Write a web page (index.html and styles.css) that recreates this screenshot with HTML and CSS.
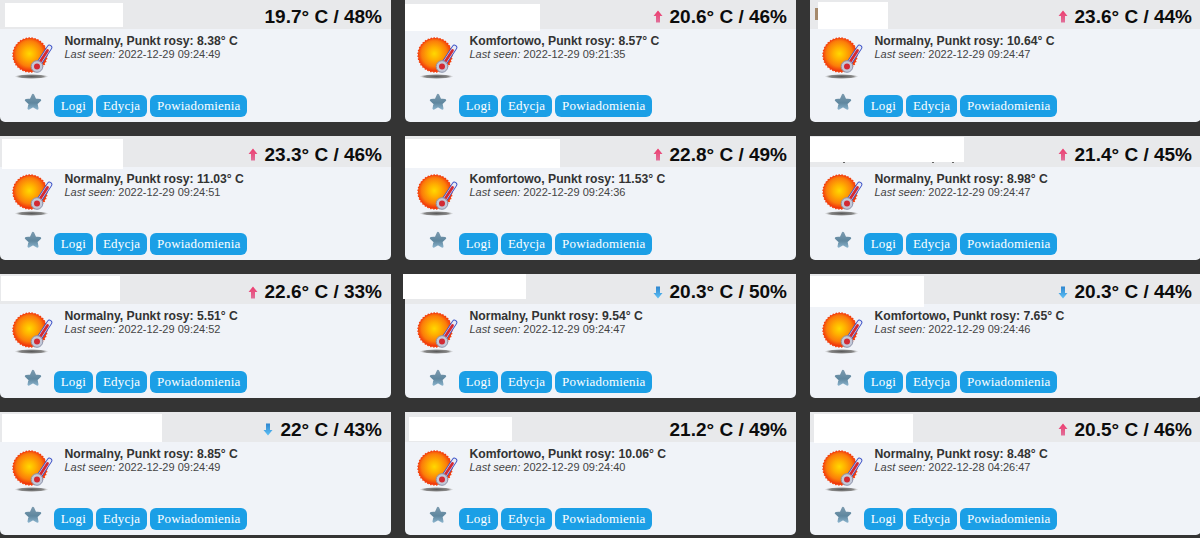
FILE: index.html
```html
<!DOCTYPE html>
<html lang="pl">
<head>
<meta charset="utf-8">
<title>Czujniki</title>
<link rel="stylesheet" href="styles.css">
</head>
<body>
<svg class="defs" width="0" height="0" aria-hidden="true">
  <defs>
    <radialGradient id="sunFill" cx="0.48" cy="0.46" r="0.54">
      <stop offset="0" stop-color="#ffd800"/>
      <stop offset="0.35" stop-color="#ffb000"/>
      <stop offset="0.72" stop-color="#fb7d0a"/>
      <stop offset="1" stop-color="#f0300c"/>
    </radialGradient>
    <radialGradient id="shadowFill" cx="0.5" cy="0.5" r="0.5">
      <stop offset="0" stop-color="#5a5a5a"/>
      <stop offset="0.7" stop-color="#888"/>
      <stop offset="1" stop-color="#bbb" stop-opacity="0"/>
    </radialGradient>
    <linearGradient id="starFill" gradientUnits="userSpaceOnUse" x1="0" y1="0" x2="0" y2="18">
      <stop offset="0" stop-color="#7f9cb0"/>
      <stop offset="0.55" stop-color="#5f879f"/>
      <stop offset="1" stop-color="#93bcd6"/>
    </linearGradient>
    <linearGradient id="upFill" x1="0" y1="0" x2="0" y2="1">
      <stop offset="0" stop-color="#ee3a6c"/>
      <stop offset="1" stop-color="#e0709a"/>
    </linearGradient>
    <linearGradient id="downFill" x1="0" y1="0" x2="0" y2="1">
      <stop offset="0" stop-color="#2f86cf"/>
      <stop offset="1" stop-color="#5cc0f5"/>
    </linearGradient>
    <symbol id="sun" viewBox="0 0 48 48">
      <ellipse cx="19.5" cy="42.5" rx="17" ry="2.4" fill="url(#shadowFill)"/>
      <circle cx="18" cy="21" r="17" fill="#f4400c" stroke="#f4400c" stroke-width="1.4" stroke-dasharray="1.5 1.5"/>
      <circle cx="18" cy="21" r="16.3" fill="url(#sunFill)"/>
      <line x1="26" y1="31" x2="37.5" y2="13.5" stroke="#3f55c8" stroke-width="5.6" stroke-linecap="round"/>
      <line x1="26" y1="31" x2="37.5" y2="13.5" stroke="#e8eaf4" stroke-width="3.8" stroke-linecap="round"/>
      <line x1="26" y1="31" x2="35.5" y2="16.5" stroke="#d22a34" stroke-width="2.8" stroke-linecap="round"/>
      <circle cx="25" cy="32.5" r="5.8" fill="#c3c8d8" stroke="#8d94ab" stroke-width="1"/>
      <circle cx="25" cy="32.5" r="3" fill="#d22a34"/>
    </symbol>
    <symbol id="star" viewBox="0 0 18 18">
      <path d="M9 2 11 6.6 16 7.2 12.3 10.5 13.3 15.500 9 13 4.700 15.500 5.700 10.500 2 7.200 7 6.600Z" fill="url(#starFill)" stroke="url(#starFill)" stroke-width="2.4" stroke-linejoin="round"/>
    </symbol>
    <symbol id="up" viewBox="0 0 10 13">
      <path d="M5 .5 9.500 6H7v6.500H3V6H.5z" fill="url(#upFill)"/>
    </symbol>
    <symbol id="down" viewBox="0 0 10 13">
      <path d="M3 .5h4V7h2.500L5 12.500.5 7H3z" fill="url(#downFill)"/>
    </symbol>
  </defs>
</svg>
<main class="grid">

  <article class="card">
    <header class="head"><span class="temp">19.7° C / 48%</span></header>
    <div class="body">
      <svg class="sun"><use href="#sun"/></svg>
      <div class="info"><p class="state">Normalny, Punkt rosy: 8.38° C</p><p class="seen"><em>Last seen:</em> 2022-12-29 09:24:49</p></div>
    </div>
    <footer class="foot"><svg class="star"><use href="#star"/></svg><a class="btn">Logi</a><a class="btn">Edycja</a><a class="btn">Powiadomienia</a></footer>
    <div class="mask m1"></div>
  </article>

  <article class="card">
    <header class="head"><svg class="arrow"><use href="#up"/></svg><span class="temp">20.6° C / 46%</span></header>
    <div class="body">
      <svg class="sun"><use href="#sun"/></svg>
      <div class="info"><p class="state">Komfortowo, Punkt rosy: 8.57° C</p><p class="seen"><em>Last seen:</em> 2022-12-29 09:21:35</p></div>
    </div>
    <footer class="foot"><svg class="star"><use href="#star"/></svg><a class="btn">Logi</a><a class="btn">Edycja</a><a class="btn">Powiadomienia</a></footer>
    <div class="mask m2"></div>
  </article>

  <article class="card">
    <header class="head"><svg class="arrow"><use href="#up"/></svg><span class="temp">23.6° C / 44%</span></header>
    <div class="body">
      <svg class="sun"><use href="#sun"/></svg>
      <div class="info"><p class="state">Normalny, Punkt rosy: 10.64° C</p><p class="seen"><em>Last seen:</em> 2022-12-29 09:24:47</p></div>
    </div>
    <footer class="foot"><svg class="star"><use href="#star"/></svg><a class="btn">Logi</a><a class="btn">Edycja</a><a class="btn">Powiadomienia</a></footer>
    <div class="mask m3"></div>
  </article>

  <article class="card">
    <header class="head"><svg class="arrow"><use href="#up"/></svg><span class="temp">23.3° C / 46%</span></header>
    <div class="body">
      <svg class="sun"><use href="#sun"/></svg>
      <div class="info"><p class="state">Normalny, Punkt rosy: 11.03° C</p><p class="seen"><em>Last seen:</em> 2022-12-29 09:24:51</p></div>
    </div>
    <footer class="foot"><svg class="star"><use href="#star"/></svg><a class="btn">Logi</a><a class="btn">Edycja</a><a class="btn">Powiadomienia</a></footer>
    <div class="mask m4"></div>
  </article>

  <article class="card">
    <header class="head"><svg class="arrow"><use href="#up"/></svg><span class="temp">22.8° C / 49%</span></header>
    <div class="body">
      <svg class="sun"><use href="#sun"/></svg>
      <div class="info"><p class="state">Komfortowo, Punkt rosy: 11.53° C</p><p class="seen"><em>Last seen:</em> 2022-12-29 09:24:36</p></div>
    </div>
    <footer class="foot"><svg class="star"><use href="#star"/></svg><a class="btn">Logi</a><a class="btn">Edycja</a><a class="btn">Powiadomienia</a></footer>
    <div class="mask m5"></div>
  </article>

  <article class="card">
    <header class="head"><svg class="arrow"><use href="#up"/></svg><span class="temp">21.4° C / 45%</span></header>
    <div class="body">
      <svg class="sun"><use href="#sun"/></svg>
      <div class="info"><p class="state">Normalny, Punkt rosy: 8.98° C</p><p class="seen"><em>Last seen:</em> 2022-12-29 09:24:47</p></div>
    </div>
    <footer class="foot"><svg class="star"><use href="#star"/></svg><a class="btn">Logi</a><a class="btn">Edycja</a><a class="btn">Powiadomienia</a></footer>
    <div class="mask m6"></div>
  </article>

  <article class="card">
    <header class="head"><svg class="arrow"><use href="#up"/></svg><span class="temp">22.6° C / 33%</span></header>
    <div class="body">
      <svg class="sun"><use href="#sun"/></svg>
      <div class="info"><p class="state">Normalny, Punkt rosy: 5.51° C</p><p class="seen"><em>Last seen:</em> 2022-12-29 09:24:52</p></div>
    </div>
    <footer class="foot"><svg class="star"><use href="#star"/></svg><a class="btn">Logi</a><a class="btn">Edycja</a><a class="btn">Powiadomienia</a></footer>
    <div class="mask m7"></div>
  </article>

  <article class="card">
    <header class="head"><svg class="arrow"><use href="#down"/></svg><span class="temp">20.3° C / 50%</span></header>
    <div class="body">
      <svg class="sun"><use href="#sun"/></svg>
      <div class="info"><p class="state">Normalny, Punkt rosy: 9.54° C</p><p class="seen"><em>Last seen:</em> 2022-12-29 09:24:47</p></div>
    </div>
    <footer class="foot"><svg class="star"><use href="#star"/></svg><a class="btn">Logi</a><a class="btn">Edycja</a><a class="btn">Powiadomienia</a></footer>
    <div class="mask m8"></div>
  </article>

  <article class="card">
    <header class="head"><svg class="arrow"><use href="#down"/></svg><span class="temp">20.3° C / 44%</span></header>
    <div class="body">
      <svg class="sun"><use href="#sun"/></svg>
      <div class="info"><p class="state">Komfortowo, Punkt rosy: 7.65° C</p><p class="seen"><em>Last seen:</em> 2022-12-29 09:24:46</p></div>
    </div>
    <footer class="foot"><svg class="star"><use href="#star"/></svg><a class="btn">Logi</a><a class="btn">Edycja</a><a class="btn">Powiadomienia</a></footer>
    <div class="mask m9"></div>
  </article>

  <article class="card">
    <header class="head"><svg class="arrow"><use href="#down"/></svg><span class="temp">22° C / 43%</span></header>
    <div class="body">
      <svg class="sun"><use href="#sun"/></svg>
      <div class="info"><p class="state">Normalny, Punkt rosy: 8.85° C</p><p class="seen"><em>Last seen:</em> 2022-12-29 09:24:49</p></div>
    </div>
    <footer class="foot"><svg class="star"><use href="#star"/></svg><a class="btn">Logi</a><a class="btn">Edycja</a><a class="btn">Powiadomienia</a></footer>
    <div class="mask m10"></div>
  </article>

  <article class="card">
    <header class="head"><span class="temp">21.2° C / 49%</span></header>
    <div class="body">
      <svg class="sun"><use href="#sun"/></svg>
      <div class="info"><p class="state">Komfortowo, Punkt rosy: 10.06° C</p><p class="seen"><em>Last seen:</em> 2022-12-29 09:24:40</p></div>
    </div>
    <footer class="foot"><svg class="star"><use href="#star"/></svg><a class="btn">Logi</a><a class="btn">Edycja</a><a class="btn">Powiadomienia</a></footer>
    <div class="mask m11"></div>
  </article>

  <article class="card">
    <header class="head"><svg class="arrow"><use href="#up"/></svg><span class="temp">20.5° C / 46%</span></header>
    <div class="body">
      <svg class="sun"><use href="#sun"/></svg>
      <div class="info"><p class="state">Normalny, Punkt rosy: 8.48° C</p><p class="seen"><em>Last seen:</em> 2022-12-28 04:26:47</p></div>
    </div>
    <footer class="foot"><svg class="star"><use href="#star"/></svg><a class="btn">Logi</a><a class="btn">Edycja</a><a class="btn">Powiadomienia</a></footer>
    <div class="mask m12"></div>
  </article>

</main>
</body>
</html>
```
FILE: styles.css
```css
html, body {
  margin: 0;
  height: 100%;
  overflow: hidden;
  background: #343434;
}

body {
  font-family: "Liberation Sans", Arial, sans-serif;
  color: #333;
}

.defs {
  display: block;
  position: absolute;
}

.grid {
  display: grid;
  grid-template-columns: repeat(3, 391px);
  grid-auto-rows: 123.67px;
  gap: 14px;
  margin-top: -1.33px;
  width: 1201px;
}

.card {
  position: relative;
  display: flex;
  flex-direction: column;
  background: #f0f3f8;
  border-radius: 0 0 5px 5px;
}

.head {
  display: flex;
  flex: none;
  box-sizing: border-box;
  justify-content: flex-end;
  align-items: center;
  gap: 7px;
  height: 30.5px;
  padding: 6px 9px 0 0;
  background: #e8e9eb;
}

.temp {
  font-size: 19px;
  font-weight: 700;
  color: #0c0c0c;
}

.arrow {
  width: 10px;
  height: 13px;
}

.body {
  display: flex;
  gap: 5px;
  padding: 4.5px 0 0 11.5px;
}

.sun {
  flex: none;
  width: 48px;
  height: 48px;
}

.info {
  padding-top: 1.5px;
}

.state {
  margin: 0;
  font-size: 12.2px;
  line-height: 13px;
  font-weight: 700;
  color: #333;
}

.seen {
  margin: 0;
  font-size: 11px;
  line-height: 13px;
  color: #444;
}

.foot {
  display: flex;
  align-items: flex-start;
  gap: 3.5px;
  margin-top: auto;
  padding: 0 0 5px 23.5px;
}

.star {
  flex: none;
  width: 18px;
  height: 18px;
  margin: -2px 9px 0 0;
}

.btn {
  display: block;
  height: 22px;
  padding: 0 6.7px;
  border-radius: 6px;
  background: #1b9fe6;
  color: #fff;
  font-family: "Liberation Serif", "Times New Roman", serif;
  font-size: 13px;
  letter-spacing: 0.2px;
  line-height: 22px;
}

.mask {
  position: absolute;
  background: #fff;
}

.m1 { left: 4.5px; top: 4.3px; width: 118.5px; height: 24px; }
.m2 { left: 0; top: 5.3px; width: 135px; height: 27px; }
.m3 { left: 8px; top: 3.3px; width: 70px; height: 27px; }
.m4 { left: 2px; top: 2.7px; width: 121px; height: 30px; }
.m5 { left: 0; top: 2.7px; width: 155px; height: 29px; }
.m6 { left: 0; top: 0.7px; width: 154px; height: 24.5px; }
.m7 { left: 1px; top: 2px; width: 119px; height: 25px; }
.m8 { left: -2.5px; top: 0; width: 123.5px; height: 25.5px; }
.m9 { left: 0; top: 2px; width: 114px; height: 31px; }
.m10 { left: 2px; top: 2.3px; width: 160px; height: 28px; }
.m11 { left: 4px; top: 5.3px; width: 103px; height: 24px; }
.m12 { left: 3.5px; top: 2.3px; width: 99px; height: 29px; }

.m3::before {
  content: "";
  position: absolute;
  left: -3px;
  top: 6px;
  width: 3px;
  height: 12px;
  background: #a58a6c;
}

.m6::after {
  content: "";
  position: absolute;
  left: 33px;
  top: 100%;
  width: 1.5px;
  height: 1.5px;
  background: #666;
  box-shadow: 89px 0 #666, 109px 0 #666;
}
```
